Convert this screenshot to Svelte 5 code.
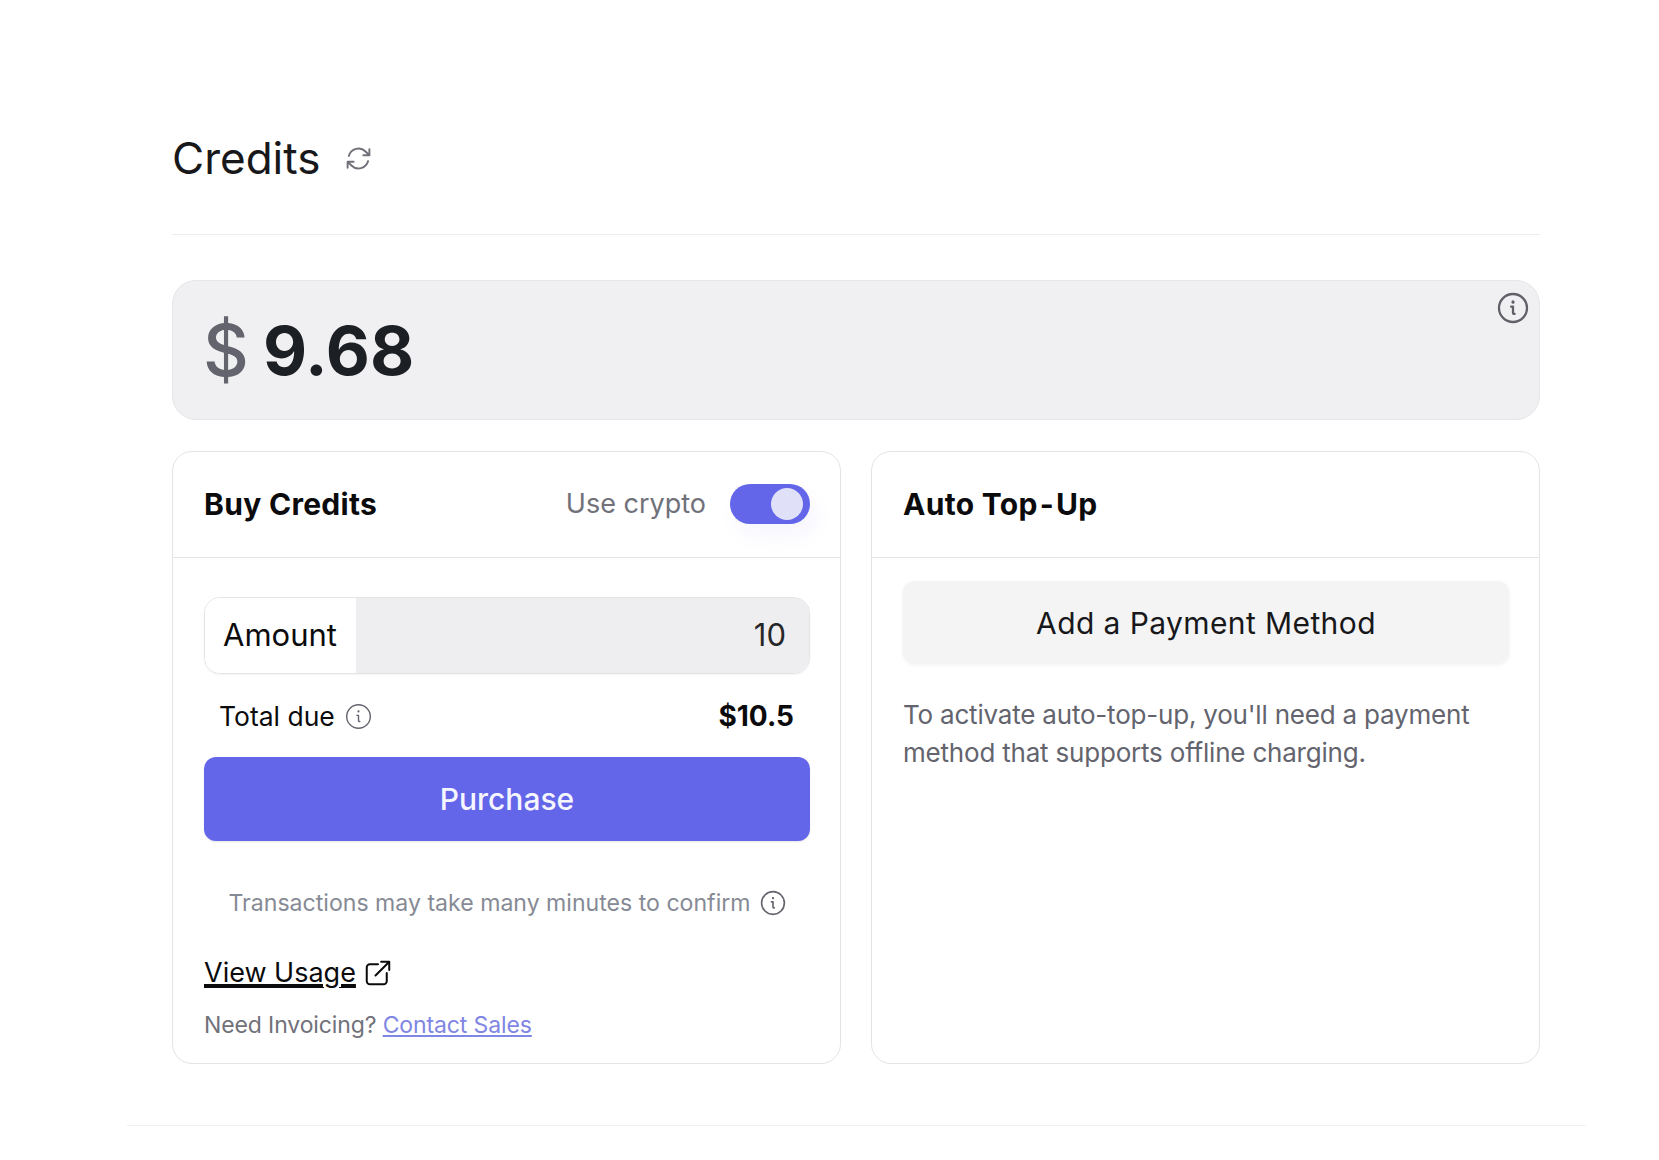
<script lang="ts">
  let useCrypto = $state(true);
  let amount = $state("10");
</script>

{#snippet info(size: number, width: number)}
  <svg class="info" viewBox="0 0 24 24" width={size} height={size} fill="none" stroke="currentColor" stroke-width={width} stroke-linecap="round" stroke-linejoin="round">
    <circle cx="12" cy="12" r="10.5" />
    <path d="M10.6 11h1.4v4.6c0 .7.5 1 1.200.8" />
    <path d="M12 7.400v.2" stroke-width={width + 0.6} />
  </svg>
{/snippet}

<main class="page">
  <div class="content">
    <header class="title-row">
      <h1>Credits</h1>
      <svg class="refresh" viewBox="0 0 24 24" width="29" height="29" fill="none" stroke="currentColor" stroke-width="1.6" stroke-linecap="round" stroke-linejoin="round">
        <path d="M16.023 9.348h4.992v-.001M2.985 19.644v-4.992m0 0h4.992m-4.993 0 3.181 3.183a8.25 8.25 0 0 0 13.803-3.7M4.031 9.865a8.25 8.25 0 0 1 13.803-3.7l3.181 3.182m0-4.991v4.99" />
      </svg>
    </header>

    <section class="balance">
      <span class="currency">$</span>
      <span class="value">9.68</span>
      <span class="balance-info">{@render info(32, 1.7)}</span>
    </section>

    <div class="cards">
      <section class="card">
        <div class="card-head">
          <h2>Buy Credits</h2>
          <div class="crypto">
            <span>Use crypto</span>
            <button class="toggle" class:on={useCrypto} aria-label="Use crypto" onclick={() => (useCrypto = !useCrypto)}>
              <span class="knob"></span>
            </button>
          </div>
        </div>
        <div class="card-body">
          <label class="amount">
            <span class="amount-label">Amount</span>
            <input bind:value={amount} />
          </label>
          <div class="total">
            <span class="total-label">Total due <span class="total-info">{@render info(27, 1.25)}</span></span>
            <strong>$10.5</strong>
          </div>
          <button class="purchase">Purchase</button>
          <p class="note">Transactions may take many minutes to confirm <span class="note-info">{@render info(26, 1.5)}</span></p>
          <a class="usage" href="#usage">
            <span>View Usage</span>
            <svg viewBox="0 0 24 24" width="30" height="30" fill="none" stroke="currentColor" stroke-width="1.6" stroke-linecap="round" stroke-linejoin="round">
              <path d="M12 5H5.500A2.500 2.500 0 0 0 3 7.500v11A2.500 2.500 0 0 0 5.500 21h11a2.500 2.500 0 0 0 2.500-2.500V12" />
              <path d="M10 14 21 3m0 0h-6.500M21 3v6.500" />
            </svg>
          </a>
          <p class="invoice">Need Invoicing? <a href="#sales">Contact Sales</a></p>
        </div>
      </section>

      <section class="card">
        <div class="card-head">
          <h2>Auto Top<span class="hy">-</span>Up</h2>
        </div>
        <div class="card-body topup">
          <button class="add">Add a Payment Method</button>
          <p class="topup-text">To activate auto-top-up, you'll need a payment method that supports offline charging.</p>
        </div>
      </section>
    </div>
  </div>
</main>

<style>
  :global(body) {
    margin: 0;
    background: #fff;
    font-family: Inter, "Liberation Sans", sans-serif;
  }

  .page {
    margin: 0 73px 0 127px;
    height: 1126px;
    box-sizing: border-box;
    border-bottom: 1px solid #f0f0f2;
  }

  .content {
    padding: 0 46px 0 45px;
  }

  .title-row {
    height: 235px;
    box-sizing: border-box;
    padding-top: 130px;
    display: flex;
    align-items: flex-start;
    gap: 24px;
    border-bottom: 1px solid #ececee;
  }

  h1 {
    margin: 0;
    font-size: 44px;
    line-height: 56px;
    font-weight: 400;
    color: #18181b;
  }

  .refresh {
    color: #71717a;
    margin-top: 14px;
  }

  .balance {
    position: relative;
    margin-top: 45px;
    height: 140px;
    box-sizing: border-box;
    padding-left: 30px;
    display: flex;
    align-items: center;
    gap: 14px;
    background: #f0f0f2;
    border: 1px solid #e6e6e9;
    border-radius: 24px;
  }

  .currency {
    font-size: 71px;
    font-weight: 500;
    color: #63646d;
  }

  .value {
    font-size: 68px;
    font-weight: 700;
    color: #1c1f24;
  }

  .balance-info {
    position: absolute;
    top: 11px;
    right: 10px;
    color: #5f6068;
  }

  .info {
    display: block;
  }

  .cards {
    margin-top: 31px;
    display: grid;
    grid-template-columns: minmax(0, 1fr) minmax(0, 1fr);
    gap: 30px;
  }

  .card {
    height: 613px;
    box-sizing: border-box;
    border: 1px solid #e4e4e7;
    border-radius: 20px;
    background: #fff;
  }

  .card-head {
    height: 106px;
    box-sizing: border-box;
    padding: 0 30px 2px 31px;
    display: flex;
    align-items: center;
    justify-content: space-between;
    border-bottom: 1px solid #e4e4e7;
  }

  h2 {
    margin: 0;
    font-size: 30px;
    font-weight: 700;
    letter-spacing: 0.3px;
    color: #0b0b0d;
  }

  .hy {
    margin: 0 2px;
  }

  .crypto {
    display: flex;
    align-items: center;
    gap: 24px;
    font-size: 27px;
    color: #71717a;
  }

  .toggle {
    width: 80px;
    height: 40px;
    padding: 4px 7px;
    border: 0;
    border-radius: 20px;
    background: #6366e9;
    display: flex;
    align-items: center;
    justify-content: flex-start;
    box-shadow: 6px 12px 20px rgba(99, 102, 233, 0.06);
  }

  .toggle.on {
    justify-content: flex-end;
  }

  .knob {
    width: 32px;
    height: 32px;
    border-radius: 50%;
    background: #e0e0f8;
  }

  .card-body {
    padding: 39px 30px 0 31px;
  }

  .amount {
    display: flex;
    height: 77px;
    box-sizing: border-box;
    border: 1px solid #e4e4e7;
    border-radius: 16px;
    overflow: hidden;
    box-shadow: 0 1px 2px rgba(0, 0, 0, 0.05);
  }

  .amount-label {
    width: 151px;
    box-sizing: border-box;
    padding: 0 0 2px 18px;
    display: flex;
    align-items: center;
    font-size: 31px;
    color: #0b0b0d;
    background: #fff;
  }

  input {
    flex: 1;
    min-width: 0;
    padding: 0 23px 2px 0;
    border: 0;
    outline: 0;
    text-align: right;
    font: inherit;
    font-size: 31px;
    color: #27272a;
    background: #eeeef0;
  }

  .total {
    height: 83px;
    box-sizing: border-box;
    padding: 1px 16px 0 15px;
    display: flex;
    align-items: center;
    justify-content: space-between;
    font-size: 26.5px;
    color: #0b0b0d;
  }

  .total strong {
    font-size: 28px;
  }

  .total-label {
    display: flex;
    align-items: center;
    gap: 10px;
  }

  .total-info {
    color: #63646d;
  }

  .purchase {
    width: 100%;
    height: 84px;
    border: 0;
    border-radius: 12px;
    background: #6366e9;
    color: #f5f5ff;
    font: inherit;
    font-size: 30px;
    font-weight: 500;
    box-shadow: 0 1px 2px rgba(0, 0, 0, 0.1);
  }

  .note {
    margin: 44px 0 0;
    display: flex;
    align-items: center;
    justify-content: center;
    gap: 9px;
    font-size: 23.1px;
    line-height: 36px;
    color: #868a95;
    white-space: nowrap;
  }

  .note-info {
    color: #63646d;
  }

  .usage {
    margin-top: 32px;
    display: inline-flex;
    align-items: center;
    gap: 7px;
    font-size: 27px;
    line-height: 40px;
    color: #0b0b0d;
  }

  .usage span {
    text-decoration: underline;
    text-underline-offset: 4px;
  }

  .invoice {
    margin: 14px 0 0;
    font-size: 23px;
    letter-spacing: -0.12px;
    line-height: 36px;
    color: #71717a;
  }

  .invoice a {
    color: #7f86e3;
  }

  .add {
    display: block;
    width: 100%;
    height: 83px;
    margin-top: -16px;
    border: 0;
    border-radius: 12px;
    background: #f4f4f5;
    color: #18181b;
    font: inherit;
    font-size: 30px;
    font-weight: 400;
    letter-spacing: 0.4px;
    box-shadow: 0 1px 4px rgba(0, 0, 0, 0.06);
  }

  .topup-text {
    margin: 32px 0 0;
    font-size: 26px;
    letter-spacing: -0.2px;
    line-height: 38px;
    color: #63646d;
  }
</style>
